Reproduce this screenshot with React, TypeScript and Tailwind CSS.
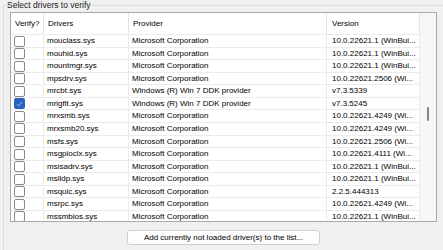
const FONT = "font-['Liberation_Sans',Arial,sans-serif]";

type Row = { name: string; provider: string; version: string; checked?: boolean };

const MS = 'Microsoft Corporation';
const DDK = 'Windows (R) Win 7 DDK provider';

const rows: Row[] = [
  { name: 'mouclass.sys', provider: MS, version: '10.0.22621.1 (WinBui...' },
  { name: 'mouhid.sys', provider: MS, version: '10.0.22621.1 (WinBui...' },
  { name: 'mountmgr.sys', provider: MS, version: '10.0.22621.1 (WinBui...' },
  { name: 'mpsdrv.sys', provider: MS, version: '10.0.22621.2506 (Wi...' },
  { name: 'mrcbt.sys', provider: DDK, version: 'v7.3.5339' },
  { name: 'mrigflt.sys', provider: DDK, version: 'v7.3.5245', checked: true },
  { name: 'mrxsmb.sys', provider: MS, version: '10.0.22621.4249 (Wi...' },
  { name: 'mrxsmb20.sys', provider: MS, version: '10.0.22621.4249 (Wi...' },
  { name: 'msfs.sys', provider: MS, version: '10.0.22621.2506 (Wi...' },
  { name: 'msgpioclx.sys', provider: MS, version: '10.0.22621.4111 (Wi...' },
  { name: 'msisadrv.sys', provider: MS, version: '10.0.22621.1 (WinBui...' },
  { name: 'mslldp.sys', provider: MS, version: '10.0.22621.1 (WinBui...' },
  { name: 'msquic.sys', provider: MS, version: '2.2.5.444313' },
  { name: 'msrpc.sys', provider: MS, version: '10.0.22621.4249 (Wi...' },
  { name: 'mssmbios.sys', provider: MS, version: '10.0.22621.1 (WinBui...' },
];

function CheckBox({ checked }: { checked?: boolean }) {
  if (checked) {
    return (
      <span className="flex h-[11px] w-[11px] items-center justify-center rounded-[2px] bg-[#2a62c4]">
        <svg width="7" height="6" viewBox="0 0 7 6" fill="none">
          <path d="M0.8 3.1 L2.7 4.8 L6.2 1.0" stroke="#9fb8e6" strokeWidth="1" />
        </svg>
      </span>
    );
  }
  return <span className="block h-[11px] w-[11px] rounded-[2px] border border-[#8a8a8a] bg-white" />;
}

export default function App() {
  return (
    <div className={`h-[250px] w-[443px] overflow-hidden bg-[#f0f0f0] text-[8px] text-black ${FONT}`}>
      <fieldset className="mx-[3px] h-[260px] border border-[#dcdcdc] px-[6px] pt-0">
        <legend className="-mt-[1px] -ml-[4px] px-[1px] text-[8.5px] leading-[10px] text-[#1a1a1a]">
          Select drivers to verify
        </legend>

        <div className="mt-[2px] flex h-[210px] w-[427px] border border-[#a9a9a9] bg-white">
          <div className="flex w-[409px] flex-col overflow-hidden">
            <div className="grid h-[21px] shrink-0 grid-cols-[33px_85px_198px_93px] items-center">
              <div className="h-full border-r border-[#e5e5e5] pl-[4px] leading-[21px]">Verify?</div>
              <div className="h-full border-r border-[#e5e5e5] pl-[4px] leading-[21px]">Drivers</div>
              <div className="h-full border-r border-[#e5e5e5] pl-[4px] leading-[21px]">Provider</div>
              <div className="h-full border-r border-[#e5e5e5] pl-[5px] leading-[21px]">Version</div>
            </div>
            {rows.map((r) => (
              <div
                key={r.name}
                className="grid h-[12.57px] shrink-0 grid-cols-[33px_85px_198px_93px] border-t border-[#ececec]"
              >
                <div className="flex items-center border-r border-[#ececec] pl-[3px]">
                  <CheckBox checked={r.checked} />
                </div>
                <div className="flex items-center border-r border-[#ececec] pl-[3px] whitespace-nowrap">{r.name}</div>
                <div className="flex items-center border-r border-[#ececec] pl-[3px] whitespace-nowrap">{r.provider}</div>
                <div className="flex items-center overflow-hidden border-r border-[#ececec] pl-[5px] whitespace-nowrap">
                  {r.version}
                </div>
              </div>
            ))}
          </div>
          <div className="flex w-[16px] flex-col items-center bg-[#f7f7f7] pt-[94px]">
            <div className="h-[14px] w-[2px] rounded-full bg-[#858585]" />
          </div>
        </div>

        <div className="mt-[8px] flex justify-center">
          <button className="h-[15px] w-[193px] rounded-[3px] border border-[#d0d0d0] bg-[#fdfdfd] text-[8px] leading-[13px] text-black">
            Add currently not loaded driver(s) to the list...
          </button>
        </div>
      </fieldset>
    </div>
  );
}
